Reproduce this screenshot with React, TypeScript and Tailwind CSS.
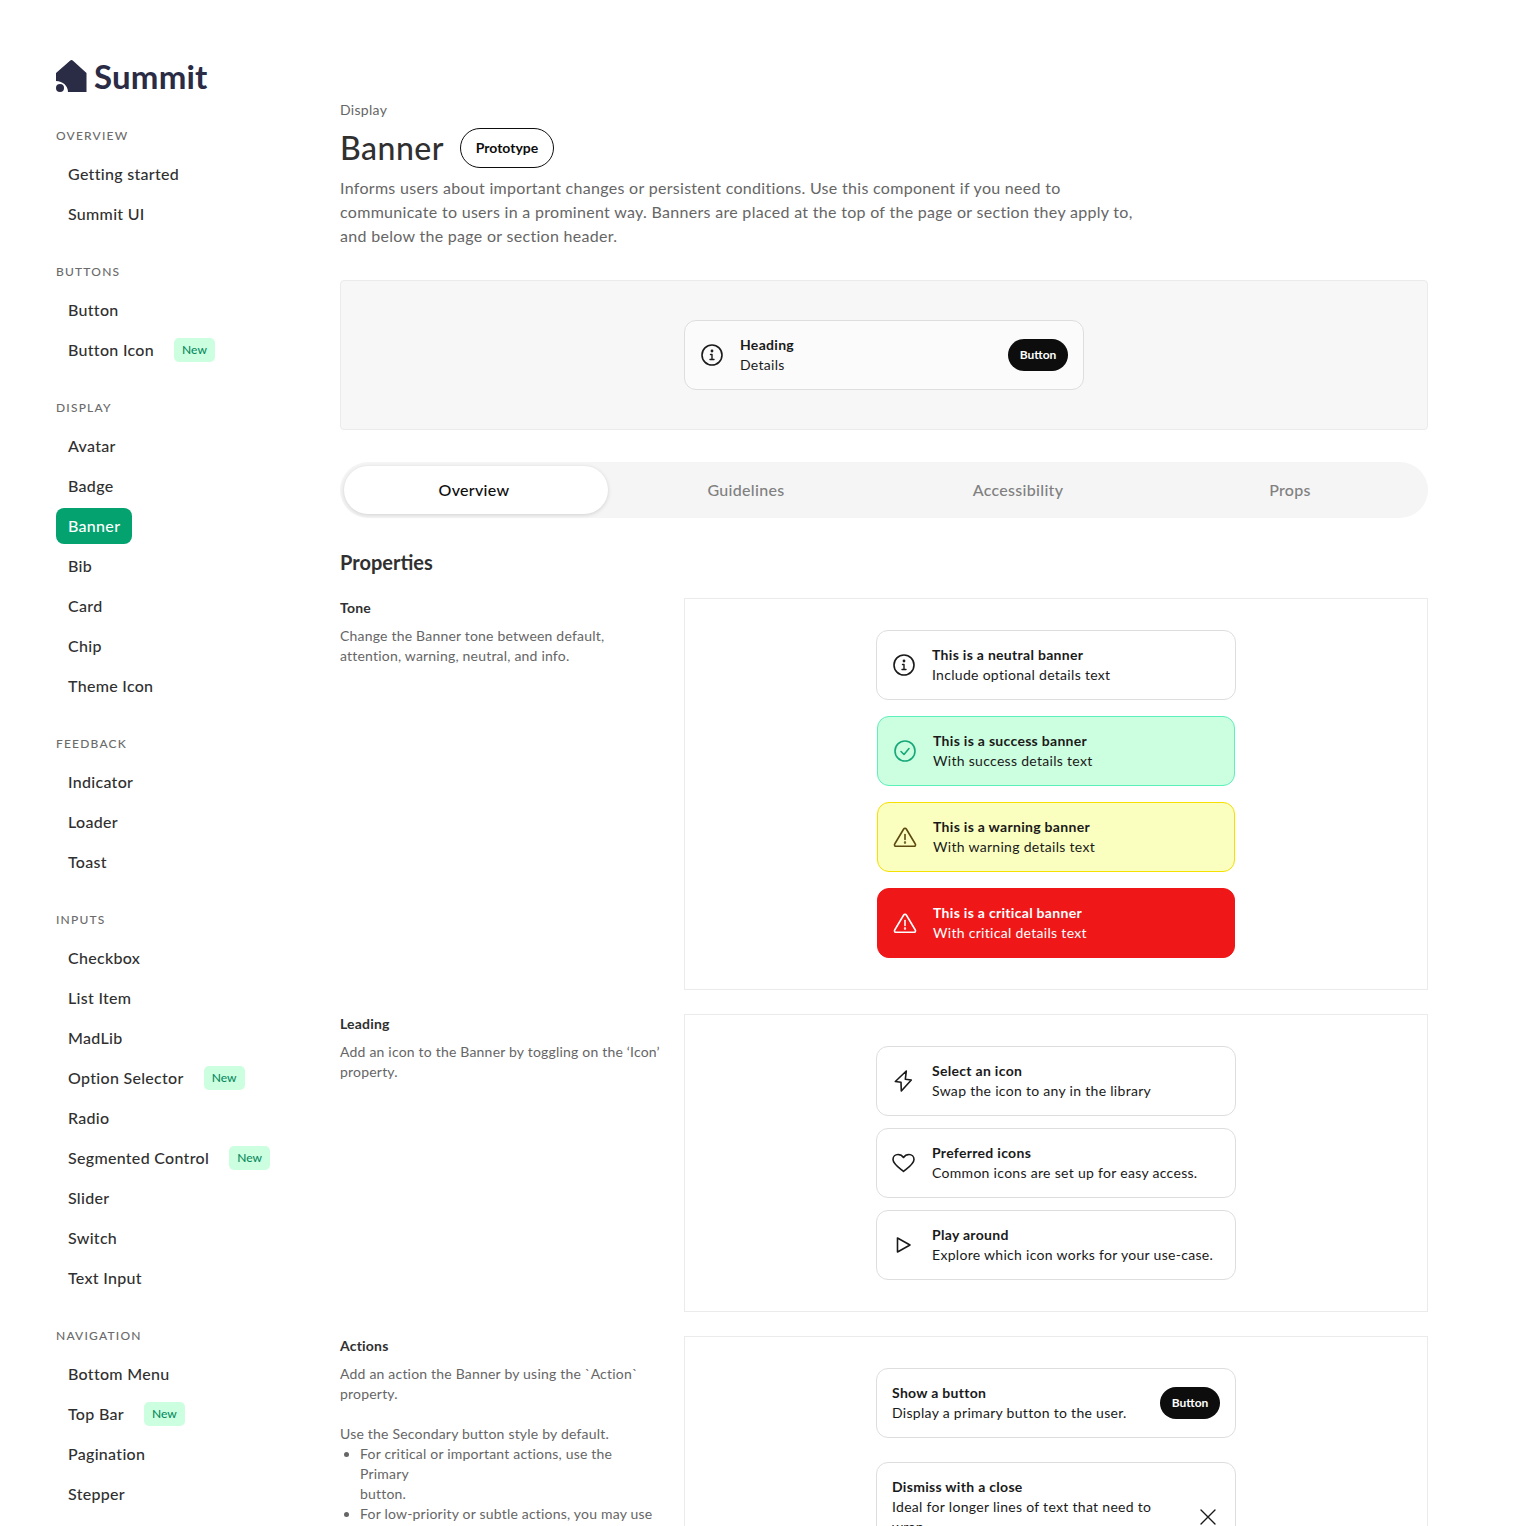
import type { ReactNode } from 'react';

const nav: { title: string; items: { label: string; isNew?: boolean; active?: boolean }[] }[] = [
  { title: 'Overview', items: [{ label: 'Getting started' }, { label: 'Summit UI' }] },
  { title: 'Buttons', items: [{ label: 'Button' }, { label: 'Button Icon', isNew: true }] },
  {
    title: 'Display',
    items: [
      { label: 'Avatar' },
      { label: 'Badge' },
      { label: 'Banner', active: true },
      { label: 'Bib' },
      { label: 'Card' },
      { label: 'Chip' },
      { label: 'Theme Icon' },
    ],
  },
  { title: 'Feedback', items: [{ label: 'Indicator' }, { label: 'Loader' }, { label: 'Toast' }] },
  {
    title: 'Inputs',
    items: [
      { label: 'Checkbox' },
      { label: 'List Item' },
      { label: 'MadLib' },
      { label: 'Option Selector', isNew: true },
      { label: 'Radio' },
      { label: 'Segmented Control', isNew: true },
      { label: 'Slider' },
      { label: 'Switch' },
      { label: 'Text Input' },
    ],
  },
  {
    title: 'Navigation',
    items: [{ label: 'Bottom Menu' }, { label: 'Top Bar', isNew: true }, { label: 'Pagination' }, { label: 'Stepper' }],
  },
];

function Icon({ children, color = 'currentColor' }: { children: ReactNode; color?: string }) {
  return (
    <svg width="24" height="24" viewBox="0 0 24 24" fill="none" stroke={color} strokeWidth="1.6" strokeLinecap="round" strokeLinejoin="round">
      {children}
    </svg>
  );
}

const InfoIcon = () => (
  <Icon>
    <circle cx="12" cy="12" r="10" />
    <path d="M10.5 11.5H12V16.5M10 16.5H14" strokeWidth="1.4" />
    <circle cx="12" cy="8" r="0.6" fill="currentColor" />
  </Icon>
);

const CheckIcon = () => (
  <Icon color="#17a87a">
    <circle cx="12" cy="12" r="10" />
    <path d="M8 12.5L11 15.5L16 9.5" />
  </Icon>
);

const AlertIcon = ({ color }: { color: string }) => (
  <Icon color={color}>
    <path d="M10.7 4a1.5 1.5 0 0 1 2.6 0L22.3 19a1.5 1.5 0 0 1-1.3 2.3H3a1.5 1.5 0 0 1-1.3-2.3Z" />
    <path d="M12 9.5V14.5" />
    <circle cx="12" cy="17.5" r="0.4" fill={color} />
  </Icon>
);

const BoltIcon = () => (
  <Icon>
    <path d="M14.3 2L3.3 12.5L9 13.2L9.3 22L19.3 11L13.3 10.3Z" />
  </Icon>
);

const HeartIcon = () => (
  <Icon>
    <path d="M11.5 20.5C8 17.5 1 13 1 8.5C1 5.5 3.3 3.5 6 3.5C8.3 3.5 10.3 4.6 11.5 6.5C12.7 4.6 14.7 3.5 17 3.5C19.7 3.5 22 5.5 22 8.5C22 13 15 17.5 11.5 20.5Z" />
  </Icon>
);

const PlayIcon = () => (
  <Icon>
    <path d="M5.5 5V19L18 12Z" />
  </Icon>
);

const CloseIcon = () => (
  <Icon>
    <path d="M5 5L19 19M19 5L5 19" strokeWidth="1.4" />
  </Icon>
);

function Logo() {
  return (
    <div className="flex items-end gap-[7px] h-[32px]">
      <svg width="31" height="32" viewBox="0 0 31 32" fill="#2a2b45">
        <path d="M14 .7a2.4 2.4 0 0 1 3 0L30.5 13V32H12C12 26 7 21 0 21V13Z" />
        <circle cx="4" cy="28" r="4" />
      </svg>
      <span className="text-[33px] leading-[32px] font-bold text-[#2a2b45] tracking-[0.2px]">Summit</span>
    </div>
  );
}

function Sidebar() {
  return (
    <aside className="w-[284px] shrink-0">
      <Logo />
      <div className="mt-[34px] flex flex-col gap-[30px]">
        {nav.map((group) => (
          <div key={group.title}>
            <div className="h-[20px] text-xs leading-[20px] uppercase tracking-[1.2px] font-medium text-[#6b6b6b]">{group.title}</div>
            <div className="mt-[10px] flex flex-col gap-[4px]">
              {group.items.map((item) => (
                <div key={item.label} className="flex items-center gap-[8px] h-[36px]">
                  <span
                    className={
                      item.active
                        ? 'h-[36px] px-[12px] flex items-center rounded-lg bg-[#03a26f] text-white font-medium tracking-[0.3px]'
                        : 'px-[12px] font-medium text-[#303030] tracking-[0.3px]'
                    }
                  >
                    {item.label}
                  </span>
                  {item.isNew && (
                    <span className="h-[24px] w-[41px] flex items-center justify-center rounded-[5px] bg-[#ccffdf] text-xs font-medium text-[#0a8a5f]">
                      New
                    </span>
                  )}
                </div>
              ))}
            </div>
          </div>
        ))}
      </div>
    </aside>
  );
}

function Banner({
  title,
  details,
  icon,
  action,
  className = 'border-[#dedede] bg-white text-[#1a1a1a]',
  width = 'w-[360px]',
}: {
  title: string;
  details: ReactNode;
  icon?: ReactNode;
  action?: ReactNode;
  className?: string;
  width?: string;
}) {
  return (
    <div className={`${width} shrink-0 flex items-center gap-[16px] rounded-xl border px-[15px] py-[14px] ${className}`}>
      {icon && <div className="shrink-0 w-[24px] h-[24px]">{icon}</div>}
      <div className="flex-1 text-sm leading-[20px] tracking-[0.3px]">
        <div className="font-bold">{title}</div>
        <div>{details}</div>
      </div>
      {action}
    </div>
  );
}

function SmallButton() {
  return (
    <button className="h-[32px] w-[60px] shrink-0 rounded-full bg-[#0d0d0d] text-xs font-bold text-white">Button</button>
  );
}

function PropertyRow({ title, children, aside }: { title: string; children: ReactNode; aside: ReactNode }) {
  return (
    <div className="flex gap-[24px]">
      <div className="w-[320px] shrink-0 text-sm leading-[20px] tracking-[0.2px] text-[#666666]">
        <div className="h-[20px] text-sm font-bold text-[#303030]">{title}</div>
        <div className="mt-[8px]">{aside}</div>
      </div>
      <div className="flex-1 flex flex-col items-center border border-[#ebebeb] py-[31px]">{children}</div>
    </div>
  );
}

export default function App() {
  return (
    <div className="h-[1526px] overflow-hidden bg-white font-['Lato',sans-serif] flex pl-[56px] pr-[100px] pt-[60px]">
      <Sidebar />
      <main className="flex-1 min-w-0 pt-[40px]">
        <div className="text-sm leading-[20px] tracking-[0.3px] text-[#666666]">Display</div>
        <div className="mt-[8px] flex items-center gap-[16px]">
          <h1 className="text-[32px] leading-[40px] font-medium text-[#303030] tracking-[0.5px]">Banner</h1>
          <span className="h-[40px] w-[94px] flex items-center justify-center rounded-full border border-[#0d0d0d] text-sm font-bold text-[#0d0d0d]">
            Prototype
          </span>
        </div>
        <p className="mt-[8px] w-[800px] text-base leading-[24px] tracking-[0.3px] text-[#666666]">
          Informs users about important changes or persistent conditions. Use this component if you need to
          <br />
          communicate to users in a prominent way. Banners are placed at the top of the page or section they apply to,
          <br />
          and below the page or section header.
        </p>

        <div className="mt-[32px] h-[150px] flex items-center justify-center rounded-sm border border-[#ebebeb] bg-[#f7f7f7]">
          <Banner
            title="Heading"
            details="Details"
            width="w-[400px]"
            className="border-[#dedede] bg-[#fbfbfb] text-[#1a1a1a]"
            icon={<InfoIcon />}
            action={<SmallButton />}
          />
        </div>

        <div className="mt-[32px] h-[56px] p-[4px] flex rounded-full bg-[#f5f5f5] text-base font-medium tracking-[0.3px]">
          <div className="w-[264px] shrink-0 pr-[4px] flex items-center justify-center rounded-full bg-white text-[#0d0d0d] shadow-[0_1px_4px_rgba(0,0,0,0.15)]">
            Overview
          </div>
          <div className="w-[272px] shrink-0 ml-[2px] flex items-center justify-center text-[#808080]">Guidelines</div>
          <div className="w-[272px] shrink-0 flex items-center justify-center text-[#808080]">Accessibility</div>
          <div className="w-[272px] shrink-0 flex items-center justify-center text-[#808080]">Props</div>
        </div>

        <h2 className="mt-[30px] text-xl leading-[28px] font-bold text-[#303030]">Properties</h2>

        <div className="mt-[22px] flex flex-col gap-[24px]">
          <PropertyRow
            title="Tone"
            aside={
              <>
                Change the Banner tone between default,
                <br />
                attention, warning, neutral, and info.
              </>
            }
          >
            <div className="flex flex-col items-center gap-[16px]">
              <Banner title="This is a neutral banner" details="Include optional details text" icon={<InfoIcon />} />
              <Banner
                title="This is a success banner"
                details="With success details text"
                width="w-[358px]"
                className="border-[#5cf0bd] bg-[#ccffdf] text-[#1a1a1a]"
                icon={<CheckIcon />}
              />
              <Banner
                title="This is a warning banner"
                details="With warning details text"
                width="w-[358px]"
                className="border-[#f5e000] bg-[#faffbf] text-[#1a1a1a]"
                icon={<AlertIcon color="#5c4a10" />}
              />
              <Banner
                title="This is a critical banner"
                details="With critical details text"
                width="w-[358px]"
                className="border-[#ef1717] bg-[#ef1717] text-white"
                icon={<AlertIcon color="#ffffff" />}
              />
            </div>
          </PropertyRow>

          <PropertyRow
            title="Leading"
            aside={
              <>
                Add an icon to the Banner by toggling on the ‘Icon’
                <br />
                property.
              </>
            }
          >
            <div className="flex flex-col items-center gap-[12px]">
              <Banner title="Select an icon" details="Swap the icon to any in the library" icon={<BoltIcon />} />
              <Banner title="Preferred icons" details="Common icons are set up for easy access." icon={<HeartIcon />} />
              <Banner title="Play around" details="Explore which icon works for your use-case." icon={<PlayIcon />} />
            </div>
          </PropertyRow>

          <PropertyRow
            title="Actions"
            aside={
              <>
                Add an action the Banner by using the `Action`
                <br />
                property.
                <div className="mt-[20px]">Use the Secondary button style by default.</div>
                <ul className="list-disc pl-[20px]">
                  <li>
                    For critical or important actions, use the Primary
                    <br />
                    button.
                  </li>
                  <li>
                    For low-priority or subtle actions, you may use a
                    <br />
                    Text button (though this is less encouraged).
                  </li>
                </ul>
              </>
            }
          >
            <div className="flex flex-col items-center gap-[24px]">
              <Banner title="Show a button" details="Display a primary button to the user." action={<SmallButton />} />
              <Banner
                title="Dismiss with a close"
                details={
                  <>
                    Ideal for longer lines of text that need to wrap
                    <br />
                    to two lines.
                  </>
                }
                action={<CloseIcon />}
              />
            </div>
          </PropertyRow>
        </div>
      </main>
    </div>
  );
}
